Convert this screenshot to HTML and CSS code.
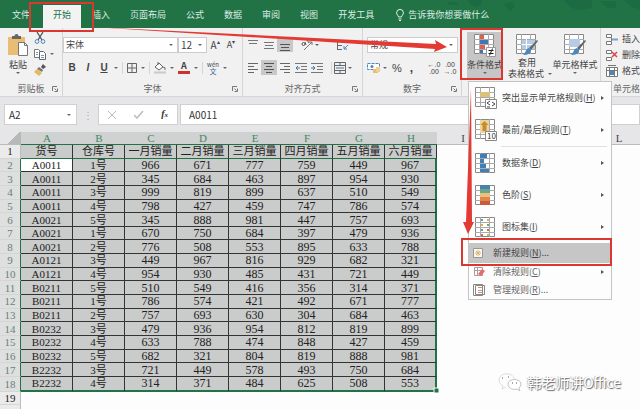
FILE: index.html
```html
<!DOCTYPE html>
<html lang="zh-CN">
<head>
<meta charset="utf-8">
<title>Excel</title>
<link rel="stylesheet" href="styles.css">
</head>
<body>
<svg class="defs" aria-hidden="true">
  <symbol id="launch" viewBox="0 0 6 6"><path d="M.5 5V.5H5M2.5 2.5l2 2M5.500 2.500v3h-3" fill="none" stroke="#777"/></symbol>
  <symbol id="grid" viewBox="0 0 20 20"><path d="M.5.5h19v19H.5z" fill="#fff" stroke="#888"/><path d="M0 5.500h20M0 10.500h20M0 15.500h20M5.500 0v20M14.500 0v20" stroke="#aaa"/></symbol>
  <symbol id="brush" viewBox="0 0 16 16"><path d="M15 0l1 1-7 9-2-2z" fill="#666"/><path d="M7 8l2 2c0 4-4 5-8 5 3-2 2-6 6-7z" fill="#4b86bd"/></symbol>
</svg>
<nav class="tabs">
  <a class="tab file" href="#">文件</a><a class="tab active" href="#">开始</a><a class="tab first" href="#">插入</a><a class="tab" href="#">页面布局</a><a class="tab" href="#">公式</a><a class="tab" href="#">数据</a><a class="tab" href="#">审阅</a><a class="tab" href="#">视图</a><a class="tab" href="#">开发工具</a>
  <a class="tab tell" href="#"><svg width="8" height="12" viewBox="0 0 8 12"><path d="M2.500 8C2.500 6.500.6 6 .6 3.800a3.400 3.400 0 0 1 6.800 0C7.400 6 5.500 6.500 5.500 8zM2.500 10h3M3 11.500h2" fill="none" stroke="#e4f1e9"/></svg>告诉我你想要做什么</a>
  <svg class="motif" width="200" height="14" viewBox="0 0 200 14"><path d="M8 2h10v3H8zM28 0h14v4l-6 3-5-2zM64 4l8-2 3 4-5 6zM124 0h28v8l-14 2-8-3zM160 1h16v7h-8zM184 0h16v9l-9-2z" fill="#1d6b42"/></svg>
</nav>
<section class="ribbon">
  <div class="group clip">
    <div class="body">
      <button class="big paste"><svg width="22" height="23" viewBox="0 0 22 23"><path d="M1 3h17v18H1z" fill="#e9bd74"/><path d="M5 5V2h2.500a2 2 0 0 1 4 0H14v3z" fill="#666"/><path d="M11.500 8.500h6l3 3v10h-9z" fill="#fff" stroke="#777"/><path d="M17.500 8.500v3h3" fill="none" stroke="#777"/></svg><span>粘贴</span><i class="arr"></i></button>
      <div class="stack">
        <button aria-label="剪切"><svg width="12" height="12" viewBox="0 0 12 12"><path d="M3 0l5 8M9 0L4 8" stroke="#555" stroke-width="1.300"/><circle cx="3" cy="9.500" r="1.900" fill="none" stroke="#4b86bd"/><circle cx="9" cy="9.500" r="1.900" fill="none" stroke="#4b86bd"/></svg></button>
        <button aria-label="复制"><svg width="12" height="12" viewBox="0 0 12 12"><path d="M.5 1.500h4l2 2v6h-6z" fill="#fff" stroke="#777"/><path d="M5.500 3.500h4l2 2v6h-6z" fill="#fff" stroke="#666"/><path d="M7 7.500h3M7 9.500h3M2 4.500h2M2 6.500h2" stroke="#7299bd"/></svg><i class="arr"></i></button>
        <button aria-label="格式刷"><svg width="12" height="12" viewBox="0 0 12 12"><path d="M9 0l3 3-3 2-2-2z" fill="#555"/><path d="M5 3l4 3-1 2-5-3z" fill="#777"/><path d="M3 5l5 4-3 3-5-4z" fill="#e6b85e"/></svg></button>
      </div>
    </div>
    <div class="label">剪贴板<svg width="6" height="6"><use href="#launch"/></svg></div>
  </div>
  <div class="group font">
    <div class="body rows">
      <div class="row top"><button class="combo face">宋体<i class="arr"></i></button><button class="combo size">12<i class="arr"></i></button><button class="grow">A<sup>▴</sup></button><button class="grow small">A<sup>▾</sup></button></div>
      <div class="row fmt">
        <button class="chr"><b>B</b></button><button class="chr"><b><em>I</em></b></button><button class="chr"><b><u>U</u></b></button><i class="arr"></i><hr>
        <button aria-label="边框"><svg width="10" height="10" viewBox="0 0 10 10"><path d="M.5.5h9v9h-9zM5 0v10M0 5h10" fill="none" stroke="#666"/></svg></button><i class="arr"></i><hr>
        <button aria-label="填充颜色"><svg width="12" height="12" viewBox="0 0 12 12"><path d="M5 1l4 4-4 3-4-3zM4 0v3M9 5q3 0 2 3" fill="#fff" stroke="#666"/><path d="M0 9.500h12v2H0z" fill="#c9c9c9"/></svg></button><i class="arr"></i>
        <button class="color">A</button><i class="arr"></i><hr>
        <button class="pinyin"><span>wén</span>文</button><i class="arr"></i>
      </div>
    </div>
    <div class="label">字体<svg width="6" height="6"><use href="#launch"/></svg></div>
  </div>
  <div class="group align">
    <div class="body rows">
      <div class="row">
        <button><svg width="10" height="12"><path d="M0 1.500h10M1 4.500h8" stroke="#777"/></svg></button><button><svg width="10" height="12"><path d="M0 3.500h10M1 6.500h8M0 9.500h10" stroke="#777"/></svg></button><button class="on"><svg width="10" height="12"><path d="M0 5.500h10M1 8.500h8M0 11.500h10" stroke="#555"/></svg></button>
        <span class="fill"></span><button><svg width="12" height="12" viewBox="0 0 12 12"><path d="M3 11l8-8M8 3h3v3" fill="none" stroke="#777"/><circle cx="2.500" cy="5" r="1.500" fill="none" stroke="#555"/><path d="M4 3l1 3M6 1l2 3" stroke="#555"/></svg></button><i class="arr"></i><span class="fill wide"></span>
        <button class="wrap"><svg width="12" height="12" viewBox="0 0 12 12"><path d="M.5 1v10M0 2.500h8M0 6.500h5M0 10.500h5" stroke="#666"/><path d="M7 10l4-4M7 7v3h3" fill="none" stroke="#4b86bd"/></svg></button>
      </div>
      <div class="row">
        <button><svg width="10" height="12"><path d="M0 1.500h10M0 4.500h6M0 7.500h10M0 10.500h6" stroke="#666"/></svg></button><button class="on"><svg width="10" height="12"><path d="M0 1.500h10M2 4.500h6M0 7.500h10M2 10.500h6" stroke="#555"/></svg></button><button><svg width="10" height="12"><path d="M0 1.500h10M4 4.500h6M0 7.500h10M4 10.500h6" stroke="#666"/></svg></button>
        <button><svg width="12" height="12"><path d="M0 1.500h12M6 4.500h6M6 7.500h6M0 10.500h12" stroke="#777"/><path d="M5 6H1M3 4L1 6l2 2" fill="none" stroke="#3c76ad"/></svg></button><button><svg width="12" height="12"><path d="M0 1.500h12M6 4.500h6M6 7.500h6M0 10.500h12" stroke="#777"/><path d="M0 6h4M2 4l2 2-2 2" fill="none" stroke="#3c76ad"/></svg></button><span class="fill"></span><hr>
        <button><svg width="12" height="12"><path d="M.5.5h11v11H.5zM0 3.500h12M0 8.500h12M6 0v3M6 9v3" fill="none" stroke="#666"/><path d="M2 6h8" stroke="#3c76ad"/></svg></button><i class="arr"></i>
      </div>
    </div>
    <div class="label">对齐方式<svg width="6" height="6"><use href="#launch"/></svg></div>
  </div>
  <div class="group number">
    <div class="body rows">
      <div class="row top"><button class="combo general">常规<i class="arr"></i></button></div>
      <div class="row">
        <button><svg width="14" height="12" viewBox="0 0 14 12"><path d="M.5 1.500h12v6H.5z" fill="#fff" stroke="#4b86bd" stroke-dasharray="3 1"/><circle cx="5" cy="4.500" r="1.500" fill="#4b86bd"/><path d="M6 7h5v4H6z" fill="#e9bd74"/><path d="M9 5h4v5H9z" fill="#efcf97"/></svg></button><i class="arr"></i>
        <button class="pct">%</button><button class="comma">,</button><span class="fill"></span>
        <button class="dec">←.0<br>.00</button><button class="dec">.00<br>→.0</button>
      </div>
    </div>
    <div class="label">数字<svg width="6" height="6"><use href="#launch"/></svg></div>
  </div>
  <div class="group styles">
    <div class="body">
      <div class="drop">
        <button class="big pressed"><svg width="22" height="23" viewBox="0 0 22 23"><svg width="20" height="20"><use href="#grid"/></svg><path d="M6 1h4v4H6z" fill="#e0604c"/><path d="M6 6h8v4H6z" fill="#3f76b8"/><path d="M6 11h5v4H6z" fill="#e0604c"/><path d="M6 16h3v3H6z" fill="#3f76b8"/><path d="M12.500 13.500h9v9h-9z" fill="#fff" stroke="#999"/><path d="M14.500 16.500h5M14.500 19.500h5M18.500 14.500l-3 7" stroke="#222"/></svg><span>条件格式</span><i class="arr"></i></button>
        <div class="menu">
          <button class="item"><svg width="22" height="22" viewBox="0 0 22 22"><svg width="20" height="20"><use href="#grid"/></svg><path d="M5 5h10v5H5z" fill="#dcc278"/><path d="M10.500 12.500h11v9h-11z" fill="#fff" stroke="#888"/><path d="M15 14l-3 2 3 2M12 20h3M17 15l3 2-3 2" fill="none" stroke="#444"/></svg><span>突出显示单元格规则(<u>H</u>)</span><i class="sub"></i></button>
          <button class="item"><svg width="22" height="22" viewBox="0 0 22 22"><svg width="20" height="20"><use href="#grid"/></svg><path d="M5 1h9v13H5z" fill="#eed39a"/><path d="M9.500 2l4 4h-2v6h-4V6h-2z" fill="#c68c33"/><path d="M10.500 12.500h11v9h-11z" fill="#fff" stroke="#888"/><text x="12" y="20" font-size="8" fill="#333">10</text></svg><span>最前/最后规则(<u>T</u>)</span><i class="sub"></i></button>
          <hr>
          <button class="item"><svg width="22" height="22" viewBox="0 0 22 22"><svg width="20" height="20" y="1"><use href="#grid"/></svg><path d="M5 2h7v4H5zM5 7h4v4H5zM5 12h6v4H5zM5 17h9v3H5z" fill="#3f7fb9"/></svg><span>数据条(<u>D</u>)</span><i class="sub"></i></button>
          <button class="item"><svg width="22" height="22" viewBox="0 0 22 22"><svg width="20" height="20" y="1"><use href="#grid"/></svg><path d="M5 1h10v4H5z" fill="#4682ad"/><path d="M5 5h10v4H5z" fill="#6ba48c"/><path d="M5 9h10v4H5z" fill="#eac17b"/><path d="M5 13h10v4H5z" fill="#e2854b"/><path d="M5 17h10v4H5z" fill="#c95c3c"/></svg><span>色阶(<u>S</u>)</span><i class="sub"></i></button>
          <button class="item"><svg width="22" height="22" viewBox="0 0 22 22"><svg width="20" height="20" y="1"><use href="#grid"/></svg><path d="M6 3h2v2H6zM12 8h2v2h-2zM6 13h2v2H6z" fill="#67a478"/><path d="M12 3h2v2h-2zM6 8h2v2H6zM12 18h2v2h-2z" fill="#e3ab4e"/><path d="M12 13h2v2h-2zM6 18h2v2H6z" fill="#d7694f"/></svg><span>图标集(<u>I</u>)</span><i class="sub"></i></button>
          <button class="item mini hot"><svg width="10" height="10"><path d="M.5.5h9v9h-9z" fill="#faf6ed" stroke="#999"/><path d="M5 2v6M2 5h6M3 3l4 4M7 3L3 7" stroke="#dcb676"/></svg><span>新建规则(<u>N</u>)...</span></button>
          <button class="item mini"><svg width="12" height="12"><path d="M1.500 1.500h8v8h-8zM1 4.500h9M4.500 1v9" fill="#fff" stroke="#b39a9a"/><path d="M5 8l4-5 3 2-4 5z" fill="#e56d70"/></svg><span>清除规则(<u>C</u>)</span><i class="sub"></i></button>
          <button class="item mini"><svg width="12" height="12"><path d="M.5.5h9v11h-9zM2.500 1.500h9v9h-9z" fill="#fff" stroke="#888"/><path d="M5 3.500h4M5 6.500h4M5 8.500h4" stroke="#d58e7b"/></svg><span>管理规则(<u>R</u>)...</span></button>
        </div>
      </div>
      <button class="big fmtTable"><svg width="22" height="23" viewBox="0 0 22 23"><svg width="20" height="20"><use href="#grid"/></svg><path d="M6 6h13v9H6z" fill="#b5cde4"/><path d="M5.500 10.500h14M10.500 5v10" stroke="#fff"/><svg x="6" y="6" width="16" height="16"><use href="#brush"/></svg></svg><span>套用</span><span class="second">表格格式<i class="arr"></i></span></button>
      <button class="big cellStyle"><svg width="22" height="23" viewBox="0 0 22 23"><svg width="20" height="20"><use href="#grid"/></svg><path d="M5 5h11v8H5z" fill="#b5cde4"/><svg x="6" y="6" width="16" height="16"><use href="#brush"/></svg></svg><span>单元格样式</span><i class="arr"></i></button>
    </div>
  </div>
  <div class="group cells">
    <div class="body stack">
      <button><svg width="12" height="12"><path d="M.5 1.500h5v3h-5zM.5 8.500h5v3h-5zM5.500 5v3" fill="#fff" stroke="#777"/><path d="M6 5.500h6v2H6z" fill="#7ba3c9"/></svg>插入</button>
      <button><svg width="12" height="12"><path d="M.5 1.500h5v3h-5zM.5 8.500h5v3h-5z" fill="#fff" stroke="#777"/><path d="M6 3l5 5M11 3L6 8" stroke="#d8464c" stroke-width="1.500"/></svg>删除</button>
      <button><svg width="12" height="12"><path d="M.5 2.500h11v9H.5zM1 5.500h11M3.500 3v9M8.500 3v9M2 .5h8" fill="#fff" stroke="#777"/><path d="M4 6h4v4H4z" fill="#4b86bd"/></svg>格式</button>
    </div>
    <div class="label">单元格</div>
  </div>
</section>
<section class="formula">
  <button class="name">A2<i class="arr"></i></button>
  <span class="dots">⋮</span>
  <div class="fx"><svg width="8" height="8"><path d="M0 0l8 8M8 0L0 8" stroke="#bbb"/></svg><svg width="10" height="8"><path d="M0 4l3 3 6-7" fill="none" stroke="#bbb" stroke-width="1.500"/></svg><b><em>f</em><small>x</small></b></div>
  <input aria-label="编辑栏" value="A0011">
</section>
<main class="sheet">
<table>
<colgroup><col class="rh"><col><col><col><col><col><col><col><col><col><col><col><col></colgroup>
<thead><tr><th class="corner"><th class="sel">A<th class="sel">B<th class="sel">C<th class="sel">D<th class="sel">E<th class="sel">F<th class="sel">G<th class="sel">H<th>I<th>J<th>K<th>L</tr></thead>
<tbody>
<tr class="titles"><th>1<td>货号<td>仓库号<td>一月销量<td>二月销量<td>三月销量<td>四月销量<td>五月销量<td>六月销量</tr>
<tr class="d"><th>2<td class="cur">A0011<td>1号<td>966<td>671<td>777<td>759<td>449<td>967</tr>
<tr class="d"><th>3<td>A0011<td>2号<td>345<td>684<td>463<td>897<td>954<td>930</tr>
<tr class="d"><th>4<td>A0011<td>3号<td>999<td>819<td>899<td>637<td>510<td>549</tr>
<tr class="d"><th>5<td>A0011<td>4号<td>798<td>427<td>459<td>747<td>786<td>574</tr>
<tr class="d"><th>6<td>A0021<td>5号<td>345<td>888<td>981<td>447<td>757<td>693</tr>
<tr class="d"><th>7<td>A0021<td>1号<td>670<td>750<td>684<td>397<td>479<td>936</tr>
<tr class="d"><th>8<td>A0021<td>2号<td>776<td>508<td>553<td>895<td>633<td>788</tr>
<tr class="d"><th>9<td>A0121<td>3号<td>449<td>967<td>816<td>929<td>682<td>321</tr>
<tr class="d"><th>10<td>A0121<td>4号<td>954<td>930<td>485<td>431<td>721<td>449</tr>
<tr class="d"><th>11<td>B0211<td>5号<td>510<td>549<td>416<td>356<td>314<td>371</tr>
<tr class="d"><th>12<td>B0211<td>1号<td>786<td>574<td>421<td>492<td>671<td>777</tr>
<tr class="d"><th>13<td>B0211<td>2号<td>757<td>693<td>630<td>304<td>684<td>463</tr>
<tr class="d"><th>14<td>B0232<td>3号<td>479<td>936<td>954<td>812<td>819<td>899</tr>
<tr class="d"><th>15<td>B0232<td>4号<td>633<td>788<td>474<td>848<td>427<td>459</tr>
<tr class="d"><th>16<td>B0232<td>5号<td>682<td>321<td>804<td>819<td>888<td>981</tr>
<tr class="d"><th>17<td>B2232<td>3号<td>721<td>449<td>578<td>493<td>750<td>684</tr>
<tr class="d last"><th>18<td>B2232<td>4号<td>314<td>371<td>484<td>625<td>508<td>553</tr>
<tr><th>19</tr>
<tr><th>20</tr>
</tbody>
</table>
</main>
<svg class="marks" width="640" height="409" viewBox="0 0 640 409" aria-hidden="true">
  <path d="M434 388h5v5h-5z" fill="#217346" stroke="#fff"/>
  <g fill="none" stroke="#d9372f" stroke-width="2"><path d="M30 3h63v28H30zM461 29h41v50h-41zM462 239h149v26H462z"/></g>
  <path d="M93 27L436 44l-1-4 12 7-13 5 1-3z" fill="#e43a34"/>
  <path d="M471 88l1 134h2l-6 12-5-12h3z" fill="#e43a34"/>
</svg>
<div class="watermark"><svg width="28" height="20" viewBox="0 0 28 20"><path d="M3 8C3 0 18 0 18 7M3 8q0 4 4 6l-1 3 4-2" fill="none" stroke="#ddd"/><path d="M25 12c0-6-13-6-13 0 0 5 6 6 9 5l3 2-1-3q2-2 2-4" fill="#fff" stroke="#c4c4c4"/><path d="M6 6h1M12 5h1M16 11h1M20 11h1" stroke="#aaa" stroke-width="2"/></svg>韩老师讲Office</div>
</body>
</html>
```
FILE: styles.css
```css
* { box-sizing: border-box; }
body {
  margin: 0;
  height: 100vh;
  overflow: hidden;
  position: relative;
  background: #e6e5e7;
  color: #444;
  font: 9px/12px "Noto Sans CJK SC", sans-serif;
}
.defs { display: none; }
button, input { font: inherit; color: inherit; border: 0; padding: 0; background: none; }
button { display: flex; align-items: center; justify-content: center; white-space: nowrap; }
svg { flex: none; }
hr { border: 0; margin: 0; }
.arr {
  flex: none;
  display: inline-block;
  border: 2px solid transparent;
  border-top-color: #666;
  border-bottom: 0;
}

.tabs { display: flex; align-items: flex-end; height: 28px; background: #217346; position: relative; }
.tab { padding: 4px 10px 7px; color: #dcece2; text-decoration: none; z-index: 1; white-space: nowrap; }
.file { padding-left: 12px; padding-right: 13px; }
.active { background: #f3f3f3; color: #217346; }
.first { padding-left: 11px; }
.tell { display: flex; align-items: center; gap: 4px; padding-left: 12px; }
.motif { position: absolute; right: 0; top: 0; }

.ribbon { display: flex; height: 69px; background: #f1f1f2; border-bottom: 1px solid #d5d5d7; }
.ribbon hr { width: 1px; height: 12px; background: #d5d5d7; }
.group { display: flex; flex-direction: column; border-right: 1px solid #d5d5d7; padding-top: 4px; flex: none; }
.body { display: flex; flex: 1; min-height: 0; }
.rows { flex-direction: column; padding-top: 5px; gap: 8px; }
.row { display: flex; align-items: center; height: 15px; }
.label { display: flex; flex: none; height: 15px; justify-content: center; align-items: center; color: #666; position: relative; white-space: nowrap; }
.label svg { position: absolute; right: 4px; top: 5px; }
.stack { display: flex; flex-direction: column; gap: 4px; }
.stack button { height: 12px; gap: 4px; }
.big { flex-direction: column; justify-content: flex-start; align-items: center; padding-top: 2px; gap: 2px; line-height: 11px; }

.clip { width: 63px; }
.clip .body { padding-left: 7px; gap: 5px; align-items: flex-start; }
.clip .stack { align-items: flex-start; }

.font { width: 180px; }
.combo { justify-content: space-between; height: 16px; background: #fff; border: 1px solid #ccc; padding: 0 4px 0 2px; }
.face { width: 115px; }
.size { width: 29px; font-size: 10px; }
.grow { font-size: 10px; width: 16px; }
.grow sup { font-size: 6px; line-height: 6px; align-self: flex-start; }
.small { font-size: 9px; }
.fmt { padding-left: 3px; gap: 4px; }
.chr { width: 12px; font: 10px/12px "Liberation Sans", sans-serif; }
.color { width: 12px; height: 13px; border-bottom: 3px solid #d32f2f; font-weight: bold; line-height: 10px; }
.pinyin { flex-direction: column; font-size: 7px; line-height: 7px; width: 12px; color: #3c6c99; }
.pinyin span { font-size: 6px; line-height: 7px; color: #444; }

.align { width: 120px; }
.align .row { padding-left: 2px; }
.align button { width: 16px; height: 15px; }
.on { background: #c8c8c8; }
.fill { flex: none; width: 6px; }
.wide { width: 16px; }

.number { width: 99px; }
.number .row { padding: 0 3px 0 4px; }
.number .fill { flex: 1; }
.general { flex: 1; }
.number .arr { margin-left: 2px; }
.pct { font: 11px/12px "Liberation Sans", sans-serif; margin-left: 5px; }
.comma { font: bold 12px/12px "Liberation Sans", sans-serif; margin-left: 8px; }
.dec { font: 7px/7px "Liberation Sans", sans-serif; width: 16px; }

.styles { width: 139px; }
.styles .body { padding-left: 5px; }
.drop { position: relative; width: 36px; }
.pressed { width: 36px; height: 48px; background: #c6c6c7; }
.fmtTable { width: 48px; gap: 0; }
.second { display: flex; align-items: center; gap: 4px; padding-left: 6px; }
.cellStyle { width: 48px; }
.menu {
  position: absolute;
  left: 1px;
  top: 49px;
  width: 144px;
  z-index: 2;
  background: #fdfdfd;
  border: 1px solid #c4c4c4;
}
.item { width: 100%; height: 32px; justify-content: flex-start; padding: 0 7px 0 6px; gap: 5px; }
.item span { flex: 1; text-align: left; }
.sub { border: 2px solid transparent; border-left: 3px solid #555; border-right: 0; }
.menu hr { width: auto; height: 1px; margin: 0 4px 0 32px; background: #e1e1e1; }
.mini { height: 18px; padding-left: 4px; gap: 8px; color: #666; }
.mini svg { width: 12px; }
.hot { height: 20px; background: #c6c6c6; color: #444; }

.cells { flex: 1; min-width: 0; border: 0; overflow: hidden; }
.cells .stack { padding: 1px 0 0 5px; align-items: flex-start; }
.cells .label { justify-content: flex-start; padding-left: 12px; }

.formula { display: flex; align-items: center; padding: 7px 0; height: 35px; font-size: 10px; color: #333; }
.name { width: 73px; height: 21px; margin-left: 4px; background: #fff; border: 1px solid #d0d0d0; justify-content: space-between; padding: 0 5px 0 4px; }
.dots { width: 21px; text-align: center; color: #aaa; }
.fx { display: flex; align-items: center; justify-content: space-between; width: 80px; height: 21px; background: #fff; border: 1px solid #d0d0d0; padding: 0 9px; }
.fx b { font-family: "Liberation Serif", serif; }
.fx small { font-size: 7px; font-style: italic; }
.formula input { flex: 1; min-width: 0; height: 21px; margin-left: 2px; background: #fff; border: 1px solid #d0d0d0; padding: 0 8px; }

.sheet { background: #fdfdfd; }
table {
  table-layout: fixed;
  width: 645px;
  height: calc(100vh - 122px);
  border-collapse: separate;
  border-spacing: 0;
  color: #222;
  font: 12px/12px "Liberation Serif", "Noto Sans CJK SC", serif;
}
col { width: 52px; }
.rh { width: 21px; }
th, td { padding: 0; text-align: center; font-weight: normal; white-space: nowrap; overflow: hidden; }
thead th { height: 13px; background: #e6e5e7; border-bottom: 1px solid #bbb; color: #444; font-size: 11px; }
thead .sel { background: #d0d1d1; color: #3c8b64; border-bottom-color: #217346; }
thead .corner { background: linear-gradient(135deg, #e6e5e7 60%, #b8b8b8 60%); }
tbody th { background: #ecebec; border-right: 1px solid #bbb; border-bottom: 1px solid #d5d5d5; font-size: 11px; }
.d th { background: #dedfdf; color: #6a7f76; border-right-color: #217346; }
tbody td { background: #cacbcb; border-right: 1px solid #333; border-bottom: 1px solid #333; }
.titles td { font-size: 11px; border-bottom-color: #217346; }
.d td:last-child { border-right: 2px solid #217346; }
.last td { border-bottom: 2px solid #217346; }
.d td:nth-child(2) { font-size: 11px; }
.d td:nth-child(3) { font-size: 11px; }
.d .cur { background: #fff; }

.marks { position: absolute; left: 0; top: 0; z-index: 3; pointer-events: none; }
.watermark {
  position: absolute;
  right: 19px;
  bottom: 17px;
  display: flex;
  align-items: center;
  gap: 3px;
  color: #fff;
  font-size: 14px;
  line-height: 20px;
  text-shadow: 1px 1px 1px #666, -1px 0 1px #bbb;
}
```
